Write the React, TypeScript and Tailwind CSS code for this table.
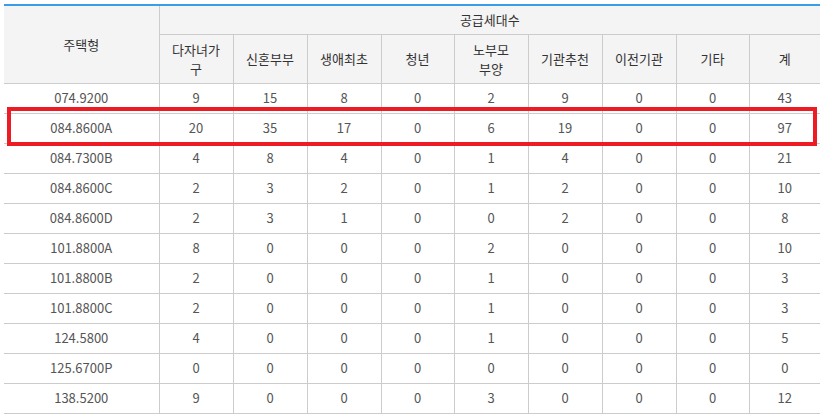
const subHeaders = ['다자녀가\n구', '신혼부부', '생애최초', '청년', '노부모\n부양', '기관추천', '이전기관', '기타', '계'];

const colWidths = [155, 74, 74, 74, 73, 74, 74, 74, 73, 71];

const rows: [string, number[]][] = [
  ['074.9200', [9, 15, 8, 0, 2, 9, 0, 0, 43]],
  ['084.8600A', [20, 35, 17, 0, 6, 19, 0, 0, 97]],
  ['084.7300B', [4, 8, 4, 0, 1, 4, 0, 0, 21]],
  ['084.8600C', [2, 3, 2, 0, 1, 2, 0, 0, 10]],
  ['084.8600D', [2, 3, 1, 0, 0, 2, 0, 0, 8]],
  ['101.8800A', [8, 0, 0, 0, 2, 0, 0, 0, 10]],
  ['101.8800B', [2, 0, 0, 0, 1, 0, 0, 0, 3]],
  ['101.8800C', [2, 0, 0, 0, 1, 0, 0, 0, 3]],
  ['124.5800', [4, 0, 0, 0, 1, 0, 0, 0, 5]],
  ['125.6700P', [0, 0, 0, 0, 0, 0, 0, 0, 0]],
  ['138.5200', [9, 0, 0, 0, 3, 0, 0, 0, 12]],
];

export default function App() {
  return (
    <div className="relative w-[820px] h-[419px] overflow-hidden bg-white pt-[4px] pl-[4px] font-['Noto_Sans_CJK_KR','Noto_Sans',sans-serif] text-[13px]">
      <table className="table-fixed border-collapse w-[816px] border-t-2 border-t-[#3a9de8]">
        <colgroup>
          {colWidths.map((w, i) => (
            <col key={i} style={{ width: w }} />
          ))}
        </colgroup>
        <thead className="bg-[#f4f4f4] text-[#333]">
          <tr className="h-[29px]">
            <th rowSpan={2} className="font-normal border-b border-r border-[#cccccc] align-middle">
              주택형
            </th>
            <th colSpan={9} className="font-normal border-b border-[#cccccc]">
              공급세대수
            </th>
          </tr>
          <tr className="h-[49px]">
            {subHeaders.map((h, i) => (
              <th
                key={i}
                className={`font-normal leading-[19px] border-b border-[#cccccc] whitespace-pre-line px-1 ${
                  i < subHeaders.length - 1 ? 'border-r' : ''
                }`}
              >
                {h}
              </th>
            ))}
          </tr>
        </thead>
        <tbody className="text-[#555]">
          {rows.map(([name, vals]) => (
            <tr key={name} className="h-[30px]">
              <td className="text-center border-b border-r border-[#cccccc]">{name}</td>
              {vals.map((v, i) => (
                <td
                  key={i}
                  className={`text-center border-b border-[#cccccc] ${i < vals.length - 1 ? 'border-r' : ''}`}
                >
                  {v}
                </td>
              ))}
            </tr>
          ))}
        </tbody>
      </table>

      {/* highlight box */}
      <div className="absolute left-[7px] top-[107px] w-[810px] h-[39px] border-4 border-[#ed1c24] pointer-events-none" />
    </div>
  );
}
